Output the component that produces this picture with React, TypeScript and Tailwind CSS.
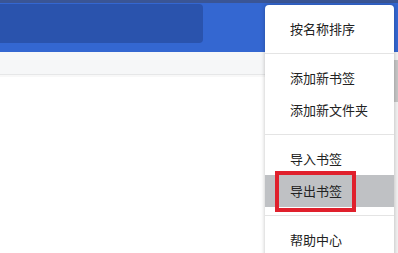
import React from 'react';

const sections: string[][] = [
    ['按名称排序'],
    ['添加新书签', '添加新文件夹'],
    ['导入书签', '导出书签'],
    ['帮助中心'],
];

const App: React.FC = () => {
    return (
        <div className="relative w-[398px] h-[253px] overflow-hidden bg-white" style={{ fontFamily: '"Noto Sans CJK SC", "Noto Sans", sans-serif' }}>
            {/* Blue header with search box */}
            <div className="h-[52px] bg-[#3467d1] flex flex-col">
                <div className="h-[3px] bg-[#3a5595]"></div>
                <div className="pt-[1px]">
                    <div className="w-[203px] h-[39px] bg-[#2a53ad] rounded-r-[4px]"></div>
                </div>
            </div>

            {/* Page body */}
            <div className="flex h-[201px]">
                <div className="flex-1 flex flex-col">
                    <div className="h-[23px] bg-[#f6f7f8] border-b border-[#e6e7e8]"></div>
                    <div className="h-[2px] bg-[#f8f8f8]"></div>
                    <div className="flex-1 bg-white"></div>
                </div>
                <div className="w-[4px] bg-[#f1f1f1] flex flex-col">
                    <div className="h-[8px]"></div>
                    <div className="h-[42px] bg-[#c6c6c6]"></div>
                </div>
            </div>

            {/* Dropdown menu */}
            <div className="absolute top-[5px] left-[265px] w-[129px] bg-white rounded-t-[4px] shadow-[0_0_4px_rgba(0,0,0,0.25)] text-[13px] text-[#222]">
                {sections.map((items, i) => (
                    <div key={i} className={`py-2 ${i > 0 ? 'border-t border-[#e4e4e4]' : ''}`}>
                        {items.map((item) => (
                            <div
                                key={item}
                                className={`relative h-8 pl-[25px] flex items-center ${item === '导出书签' ? 'bg-[#bfc1c4]' : ''}`}
                            >
                                {item}
                                {item === '导出书签' && (
                                    <div className="absolute left-[10px] top-[-4px] w-[81px] h-[41px] border-4 border-[#e0202c]"></div>
                                )}
                            </div>
                        ))}
                    </div>
                ))}
            </div>
        </div>
    );
};

export default App;
